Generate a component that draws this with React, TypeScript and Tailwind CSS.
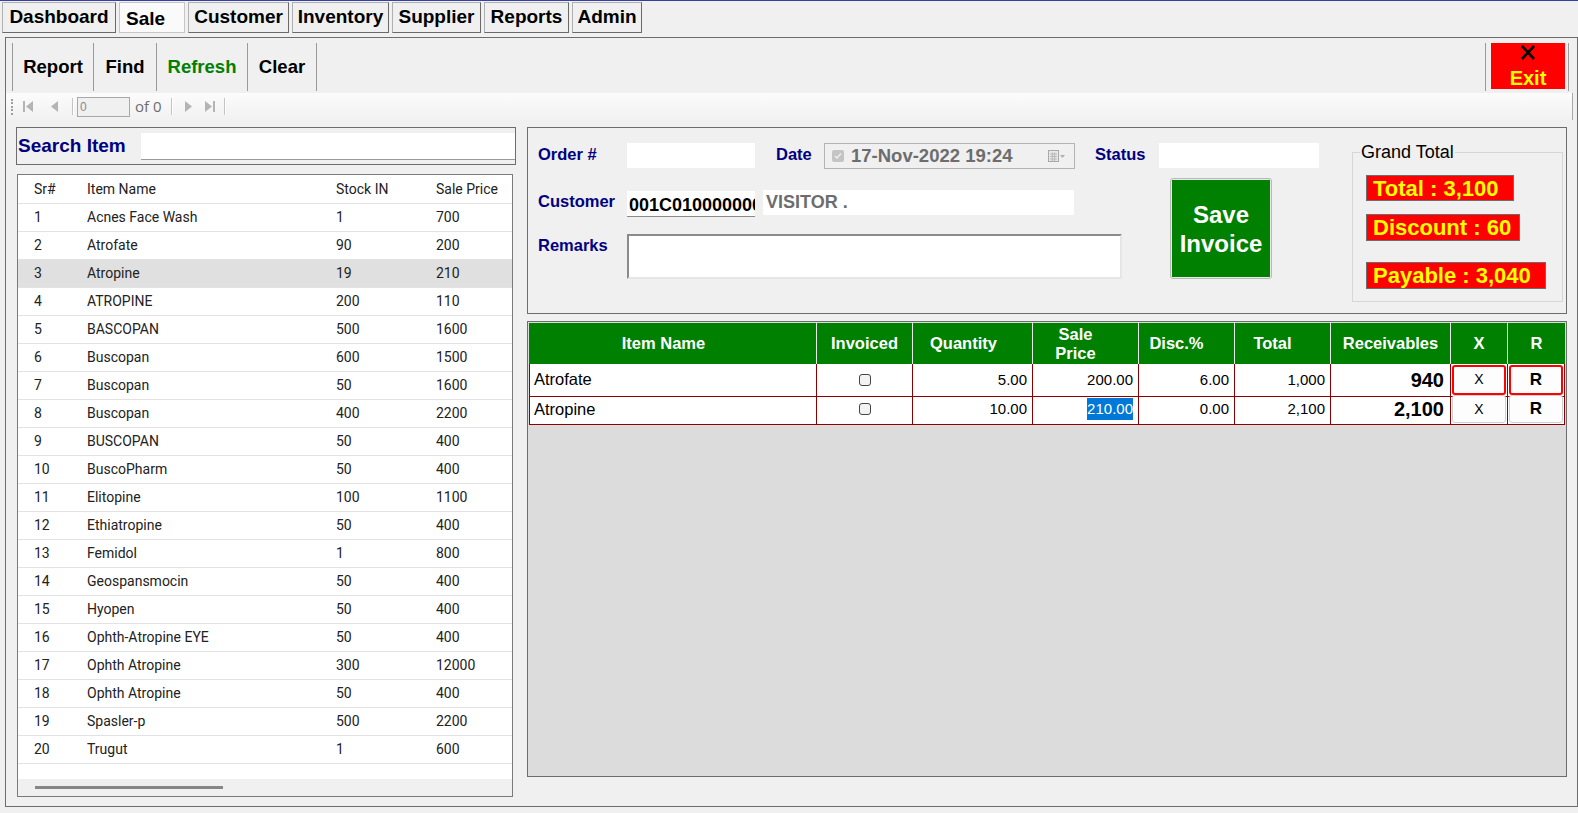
import React from "react";

const tabs = [
  { name: "Dashboard", cls: "w-[114px] justify-center" },
  { name: "Sale", cls: "w-[66px] justify-start pl-[6px]", active: true },
  { name: "Customer", cls: "w-[101px] justify-center" },
  { name: "Inventory", cls: "w-[97px] justify-center" },
  { name: "Supplier", cls: "w-[89px] justify-center" },
  { name: "Reports", cls: "w-[85px] justify-center" },
  { name: "Admin", cls: "w-[70px] justify-center" },
];

const tools = [
  { name: "Report", cls: "w-[81px] text-black" },
  { name: "Find", cls: "w-[63px] text-black" },
  { name: "Refresh", cls: "w-[91px] text-[#008000]" },
  { name: "Clear", cls: "w-[69px] text-black" },
];

const items = [
  ["1", "Acnes Face Wash", "1", "700"],
  ["2", "Atrofate", "90", "200"],
  ["3", "Atropine", "19", "210"],
  ["4", "ATROPINE", "200", "110"],
  ["5", "BASCOPAN", "500", "1600"],
  ["6", "Buscopan", "600", "1500"],
  ["7", "Buscopan", "50", "1600"],
  ["8", "Buscopan", "400", "2200"],
  ["9", "BUSCOPAN", "50", "400"],
  ["10", "BuscoPharm", "50", "400"],
  ["11", "Elitopine", "100", "1100"],
  ["12", "Ethiatropine", "50", "400"],
  ["13", "Femidol", "1", "800"],
  ["14", "Geospansmocin", "50", "400"],
  ["15", "Hyopen", "50", "400"],
  ["16", "Ophth-Atropine EYE", "50", "400"],
  ["17", "Ophth Atropine", "300", "12000"],
  ["18", "Ophth Atropine", "50", "400"],
  ["19", "Spasler-p", "500", "2200"],
  ["20", "Trugut", "1", "600"],
];

const lines = [
  { name: "Atrofate", qty: "5.00", price: "200.00", disc: "6.00", total: "1,000", rec: "940", focus: true },
  { name: "Atropine", qty: "10.00", price: "210.00", disc: "0.00", total: "2,100", rec: "2,100", focus: false },
];

function NavIcon({ kind }: { kind: "first" | "prev" | "next" | "last" }) {
  return (
    <svg width="14" height="13" viewBox="0 0 14 13">
      {kind === "first" && (
        <>
          <rect x="1" y="1" width="2" height="11" fill="#b4b4b4" />
          <path d="M11 1 L4 6.5 L11 12 Z" fill="#b4b4b4" />
        </>
      )}
      {kind === "prev" && <path d="M10 1 L3 6.5 L10 12 Z" fill="#b4b4b4" />}
      {kind === "next" && <path d="M4 1 L11 6.5 L4 12 Z" fill="#b4b4b4" />}
      {kind === "last" && (
        <>
          <path d="M2 1 L9 6.5 L2 12 Z" fill="#b4b4b4" />
          <rect x="10" y="1" width="2" height="11" fill="#b4b4b4" />
        </>
      )}
    </svg>
  );
}

function NavSep() {
  return <div className="w-px h-[17px] bg-[#c4c4c4] border-r border-white box-content" />;
}

export default function App() {
  return (
    <div className="w-[1578px] h-[813px] bg-[#f0f0f0] border-t border-[#3440a8] overflow-hidden font-['Liberation_Sans',Arial,sans-serif] text-black">
      {/* tabs */}
      <div className="flex gap-[3px] pl-[2px] pt-[1px]">
        {tabs.map((t) => (
          <div
            key={t.name}
            className={
              t.active
                ? "h-[31px] flex items-center pt-[3px] text-[19px] font-bold border border-[#c6c6c6] bg-[#fafafa] " + t.cls
                : "h-[31px] flex items-center text-[19px] font-bold border border-[#b0b0b0] border-r-[#6a6a6a] border-b-[#6a6a6a] bg-[#f0f0f0] " + t.cls
            }
          >
            {t.name}
          </div>
        ))}
      </div>

      {/* main frame */}
      <div className="mt-[4px] ml-[5px] w-[1573px] h-[770px] border border-[#6d6d6d] flex flex-col">
        {/* toolbar */}
        <div className="h-[55px] flex items-start pt-[5px] pl-[6px]">
          <div className="flex h-[48px] border-l border-[#9a9a9a]">
            {tools.map((t) => (
              <div
                key={t.name}
                className={"h-full flex items-center justify-center border-r border-[#9a9a9a] text-[18.5px] font-bold " + t.cls}
              >
                {t.name}
              </div>
            ))}
          </div>
          <div className="ml-auto mr-[8px] h-[48px] border-l border-r border-[#9a9a9a] pl-[5px] pr-[3px]">
            <div className="w-[74px] h-[46px] bg-[#ff0000] flex flex-col items-center">
              <svg width="16" height="15" viewBox="0 0 16 15" className="mt-[2px]">
                <path d="M2 1 L14 14 M14 1 L2 14" stroke="#000" strokeWidth="2.6" />
              </svg>
              <div className="text-[#ffff00] font-bold text-[20px] leading-[22px] mt-[7px]">Exit</div>
            </div>
          </div>
        </div>

        {/* binding navigator */}
        <div className="h-[27px] mr-[4px] flex items-center bg-gradient-to-b from-[#fcfcfc] to-[#f1f1f1] border-r border-[#a8a8a8] text-[14px] text-[#555]">
          <div className="ml-[5px] w-[3px] h-[16px] flex flex-col justify-between">
            {[0, 1, 2, 3, 4].map((i) => (
              <div key={i} className="w-[2px] h-[2px] bg-[#a0a0a0]" />
            ))}
          </div>
          <div className="ml-[8px]"><NavIcon kind="first" /></div>
          <div className="ml-[12px]"><NavIcon kind="prev" /></div>
          <div className="ml-[10px]"><NavSep /></div>
          <div className="ml-[3px] w-[53px] h-[20px] border border-[#a8a8a8] bg-[#f0f0f0] text-[12px] text-[#8a8a8a] pl-[2px] leading-[18px]">0</div>
          <div className="ml-[5px] text-[15px] text-[#6d6d6d] font-['Open_Sans',sans-serif]">of 0</div>
          <div className="ml-[9px]"><NavSep /></div>
          <div className="ml-[8px]"><NavIcon kind="next" /></div>
          <div className="ml-[8px]"><NavIcon kind="last" /></div>
          <div className="ml-[7px]"><NavSep /></div>
        </div>

        {/* content */}
        <div className="flex mt-[7px] pl-[10px]">
          {/* left column */}
          <div className="w-[500px] flex flex-col">
            <div className="h-[38px] border border-[#6d6d6d] flex items-center">
              <div className="w-[124px] pl-[1px] text-[19px] font-bold text-[#000080]">Search Item</div>
              <div className="flex-1 h-[27px] bg-white border-b border-[#9a9a9a]" />
            </div>
            <div className="mt-[9px] ml-[1px] w-[496px] h-[623px] border border-[#7a7a7a] bg-white flex flex-col font-['Roboto',sans-serif] text-[14px] text-[#222]">
              <div className="h-[29px] grid grid-cols-[53px_249px_100px_1fr] items-center pl-[16px] border-b border-[#e2e2e2]">
                <div>Sr#</div>
                <div>Item Name</div>
                <div>Stock IN</div>
                <div>Sale Price</div>
              </div>
              <div className="flex-1">
                {items.map((r) => (
                  <div
                    key={r[0]}
                    className={
                      r[0] === "3"
                        ? "h-[28px] grid grid-cols-[53px_249px_100px_1fr] items-center pl-[16px] border-b border-[#e2e2e2] bg-[#e0e0e0]"
                        : "h-[28px] grid grid-cols-[53px_249px_100px_1fr] items-center pl-[16px] border-b border-[#e2e2e2]"
                    }
                  >
                    <div>{r[0]}</div>
                    <div>{r[1]}</div>
                    <div>{r[2]}</div>
                    <div>{r[3]}</div>
                  </div>
                ))}
              </div>
              <div className="h-[17px] bg-[#f0f0f0] flex items-center">
                <div className="ml-[17px] w-[188px] h-[3px] bg-[#868686]" />
              </div>
            </div>
          </div>

          {/* right column */}
          <div className="ml-[11px] w-[1040px] flex flex-col">
            {/* order form */}
            <div className="h-[187px] border border-[#6d6d6d] flex pl-[10px]">
              <div className="w-[781px] flex flex-col">
                <div className="mt-[15px] h-[25px] flex items-center text-[16.5px] font-bold text-[#000080]">
                  <div className="w-[89px] -mt-[2px]">Order #</div>
                  <div className="w-[128px] h-[25px] bg-white" />
                  <div className="ml-[21px] w-[48px] -mt-[2px]">Date</div>
                  <div className="w-[251px] h-[26px] border border-[#b4b4b4] bg-[#f0f0f0] flex items-center">
                    <div className="ml-[7px] w-[12px] h-[12px] rounded-[2px] bg-[#c4c4c4] flex items-center justify-center">
                      <svg width="8" height="8" viewBox="0 0 8 8">
                        <path d="M1 4 L3 6 L7 1.5" stroke="#eee" strokeWidth="1.4" fill="none" />
                      </svg>
                    </div>
                    <div className="ml-[7px] text-[18.5px] font-bold text-[#6d6d6d]">17-Nov-2022 19:24</div>
                    <svg width="18" height="12" viewBox="0 0 18 12" className="ml-auto mr-[8px]">
                      <rect x="0.5" y="0.5" width="10" height="11" fill="#e8e8e8" stroke="#a8a8a8" />
                      <path d="M2 4 H9 M2 6.5 H9 M2 9 H9 M4.3 2.5 V11 M6.6 2.5 V11" stroke="#b8b8b8" strokeWidth="1" />
                      <path d="M12 5 L17 5 L14.5 8 Z" fill="#b0b0b0" />
                    </svg>
                  </div>
                  <div className="ml-[20px] w-[64px] -mt-[2px]">Status</div>
                  <div className="w-[160px] h-[25px] bg-white" />
                </div>
                <div className="flex">
                  <div className="w-[584px] flex flex-col">
                    <div className="mt-[23px] flex items-start">
                      <div className="w-[89px] -mt-[2px] text-[16.5px] font-bold text-[#000080]">Customer</div>
                      <div className="w-[128px] h-[26px] bg-white border-b border-[#8a8a8a] overflow-hidden whitespace-nowrap pl-[2px] pt-[5px] text-[18px] leading-[18px] font-bold text-black">
                        001C010000000
                      </div>
                      <div className="ml-[8px] w-[311px] h-[25px] -mt-[1px] bg-white pl-[3px] flex items-center text-[18px] font-bold text-[#6d6d6d]">
                        VISITOR .
                      </div>
                    </div>
                    <div className="mt-[17px] flex items-start">
                      <div className="w-[89px] -mt-px text-[16.5px] font-bold text-[#000080]">Remarks</div>
                      <div className="w-[495px] h-[45px] bg-white border-2 border-t-[#8a8a8a] border-l-[#8a8a8a] border-r-[#e6e6e6] border-b-[#e6e6e6]" />
                    </div>
                  </div>
                  <div className="ml-[48px] mt-[10px] w-[102px] h-[101px] rounded-[3px] border border-[#b8b8b8] bg-[#e8e8e8] p-px">
                    <div className="w-full h-full bg-[#008000] flex flex-col items-center justify-center text-white font-bold text-[24px] leading-[29px]">
                      <div>Save</div>
                      <div>Invoice</div>
                    </div>
                  </div>
                </div>
              </div>

              <fieldset className="ml-[33px] mt-[14px] w-[211px] h-[160px] border border-[#d6d6d6]">
                <legend className="ml-[7px] px-px text-[18px] leading-[20px] text-black">Grand Total</legend>
                <div className="flex flex-col items-start pl-[13px]">
                  <div className="mt-[13px] w-[148px] h-[26px] bg-[#ff0000] border border-[#6d6d6d] pl-[6px] flex items-center text-[22px] font-bold text-[#ffff00] whitespace-nowrap">
                    Total : 3,100
                  </div>
                  <div className="mt-[13px] w-[154px] h-[27px] bg-[#ff0000] border border-[#6d6d6d] pl-[6px] flex items-center text-[22px] font-bold text-[#ffff00] whitespace-nowrap">
                    Discount : 60
                  </div>
                  <div className="mt-[21px] w-[180px] h-[27px] bg-[#ff0000] border border-[#6d6d6d] pl-[6px] flex items-center text-[22px] font-bold text-[#ffff00] whitespace-nowrap">
                    Payable : 3,040
                  </div>
                </div>
              </fieldset>
            </div>

            {/* invoice grid */}
            <div className="mt-[7px] h-[456px] border border-[#6d6d6d] bg-[#dcdcdc] p-px">
              <div className="h-[41px] grid grid-cols-[288px_96px_120px_106px_96px_96px_120px_57px_57px] bg-[#008000] text-white font-bold text-[16.5px] leading-[19px]">
                <div className="flex items-center justify-center pr-[18px] border-r border-[#e8e8e8]">Item Name</div>
                <div className="flex items-center justify-center border-r border-[#e8e8e8]">Invoiced</div>
                <div className="flex items-center justify-center pr-[18px] border-r border-[#e8e8e8]">Quantity</div>
                <div className="flex flex-col items-center justify-center pr-[20px] border-r border-[#e8e8e8] text-center">
                  <div>Sale</div>
                  <div>Price</div>
                </div>
                <div className="flex items-center justify-center pr-[20px] border-r border-[#e8e8e8]">Disc.%</div>
                <div className="flex items-center justify-center pr-[20px] border-r border-[#e8e8e8]">Total</div>
                <div className="flex items-center justify-center border-r border-[#e8e8e8]">Receivables</div>
                <div className="flex items-center justify-center border-r border-[#e8e8e8]">X</div>
                <div className="flex items-center justify-center">R</div>
              </div>
              {lines.map((l) => (
                <div
                  key={l.name}
                  className="h-[30px] grid grid-cols-[288px_96px_120px_106px_96px_96px_120px_57px_57px] bg-white text-[15px]"
                >
                  <div className="flex items-center pl-[4px] border-l border-r border-b border-[#8b0000] text-[16.5px]">{l.name}</div>
                  <div className="flex items-center justify-center border-r border-b border-[#8b0000]">
                    <div className="w-[12px] h-[12px] rounded-[3px] border border-[#444] bg-[#f3f3f3]" />
                  </div>
                  <div className="flex items-center justify-end pr-[5px] border-r border-b border-[#8b0000]">{l.qty}</div>
                  <div className="flex items-center justify-end pr-[5px] border-r border-b border-[#8b0000]">
                    {l.focus ? l.price : <span className="bg-[#0078d7] text-white">{l.price}</span>}
                  </div>
                  <div className="flex items-center justify-end pr-[5px] border-r border-b border-[#8b0000]">{l.disc}</div>
                  <div className="flex items-center justify-end pr-[5px] border-r border-b border-[#8b0000]">{l.total}</div>
                  <div className="flex items-center justify-end pr-[6px] border-r border-b border-[#8b0000] text-[20px] font-bold">{l.rec}</div>
                  <div className="flex items-stretch p-px border-r border-b border-[#8b0000]">
                    <div
                      className={
                        l.focus
                          ? "flex-1 flex items-center justify-center rounded-[3px] border-2 border-[#ff0000] bg-[#fdfdfd] text-[14px]"
                          : "flex-1 flex items-center justify-center rounded-[3px] border border-[#d0d0d0] bg-[#fdfdfd] text-[14px]"
                      }
                    >
                      X
                    </div>
                  </div>
                  <div className="flex items-stretch p-px border-r border-b border-[#8b0000]">
                    <div
                      className={
                        l.focus
                          ? "flex-1 flex items-center justify-center rounded-[3px] border-2 border-[#ff0000] bg-[#fdfdfd] text-[17px] font-bold"
                          : "flex-1 flex items-center justify-center rounded-[3px] border border-[#d0d0d0] bg-[#fdfdfd] text-[17px] font-bold"
                      }
                    >
                      R
                    </div>
                  </div>
                </div>
              ))}
            </div>
          </div>
        </div>
      </div>
    </div>
  );
}
